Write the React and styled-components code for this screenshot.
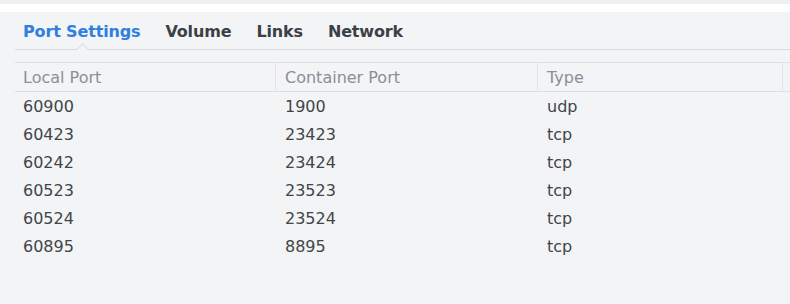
import React from "react"
import styled, { createGlobalStyle } from "styled-components"

const GlobalStyle = createGlobalStyle`
	html, body {
		margin: 0;
		padding: 0;
		background: #f3f4f6;
		font-family: "DejaVu Sans", Verdana, sans-serif;
	}
`

const Page = styled.div`
	width: 790px;
	height: 304px;
	overflow: hidden;
	background: #f3f4f6;
	border-top: 4px solid #eff0f2;
	box-sizing: border-box;
`

const WhiteBand = styled.div`
	height: 8px;
	background: #ffffff;
`

const Panel = styled.div`
	padding-left: 15px;
`

const TabBar = styled.nav`
	display: flex;
	align-items: center;
	gap: 25px;
	height: 38px;
	padding: 2px 0 0 8px;
	border-bottom: 1px solid #d8dbdf;
	box-sizing: border-box;
`

const Tab = styled.span`
	position: relative;
	font-size: 16px;
	font-weight: 700;
	letter-spacing: -0.15px;
	color: ${p => (p.$active ? "#2f7fdf" : "#3b4046")};
	line-height: 35px;

	${p => p.$active && `
		&:after {
			content: '';
			position: absolute;
			left: 50%;
			bottom: -5px;
			width: 8px;
			height: 8px;
			margin-left: -4px;
			background: #f3f4f6;
			border-top: 1px solid #d8dbdf;
			border-left: 1px solid #d8dbdf;
			transform: rotate(45deg);
		}
	`}
`

const Table = styled.div`
	margin-top: 12px;
	display: grid;
	grid-template-columns: 260px 262px 245px 1fr;
`

const HeadCell = styled.div`
	height: 30px;
	display: flex;
	align-items: center;
	padding-left: ${p => (p.$first ? "8px" : "9px")};
	border-top: 1px solid #dcdfe3;
	border-bottom: 1px solid #dcdfe3;
	border-left: ${p => (p.$first ? "none" : "1px solid #e1e4e7")};
	font-size: 16px;
	color: #8b8f94;
	box-sizing: border-box;
	white-space: nowrap;
`

const Cell = styled.div`
	height: 28px;
	display: flex;
	align-items: center;
	padding: 1px 0 0 ${p => (p.$first ? "8px" : "10px")};
	box-sizing: border-box;
	font-size: 16px;
	color: #414549;
	white-space: nowrap;
`

const rows = [
	["60900", "1900", "udp"],
	["60423", "23423", "tcp"],
	["60242", "23424", "tcp"],
	["60523", "23523", "tcp"],
	["60524", "23524", "tcp"],
	["60895", "8895", "tcp"],
]

const tabs = ["Port Settings", "Volume", "Links", "Network"]

const App = () => (
	<Page>
		<GlobalStyle />
		<WhiteBand />
		<Panel>
			<TabBar>
				{tabs.map((t, i) => (
					<Tab key={t} $active={i === 0}>{t}</Tab>
				))}
			</TabBar>
			<Table>
				<HeadCell $first>Local Port</HeadCell>
				<HeadCell>Container Port</HeadCell>
				<HeadCell>Type</HeadCell>
				<HeadCell />
				{rows.map((r, i) => (
					<React.Fragment key={i}>
						<Cell $first>{r[0]}</Cell>
						<Cell>{r[1]}</Cell>
						<Cell>{r[2]}</Cell>
						<Cell />
					</React.Fragment>
				))}
			</Table>
		</Panel>
	</Page>
)

export default App
